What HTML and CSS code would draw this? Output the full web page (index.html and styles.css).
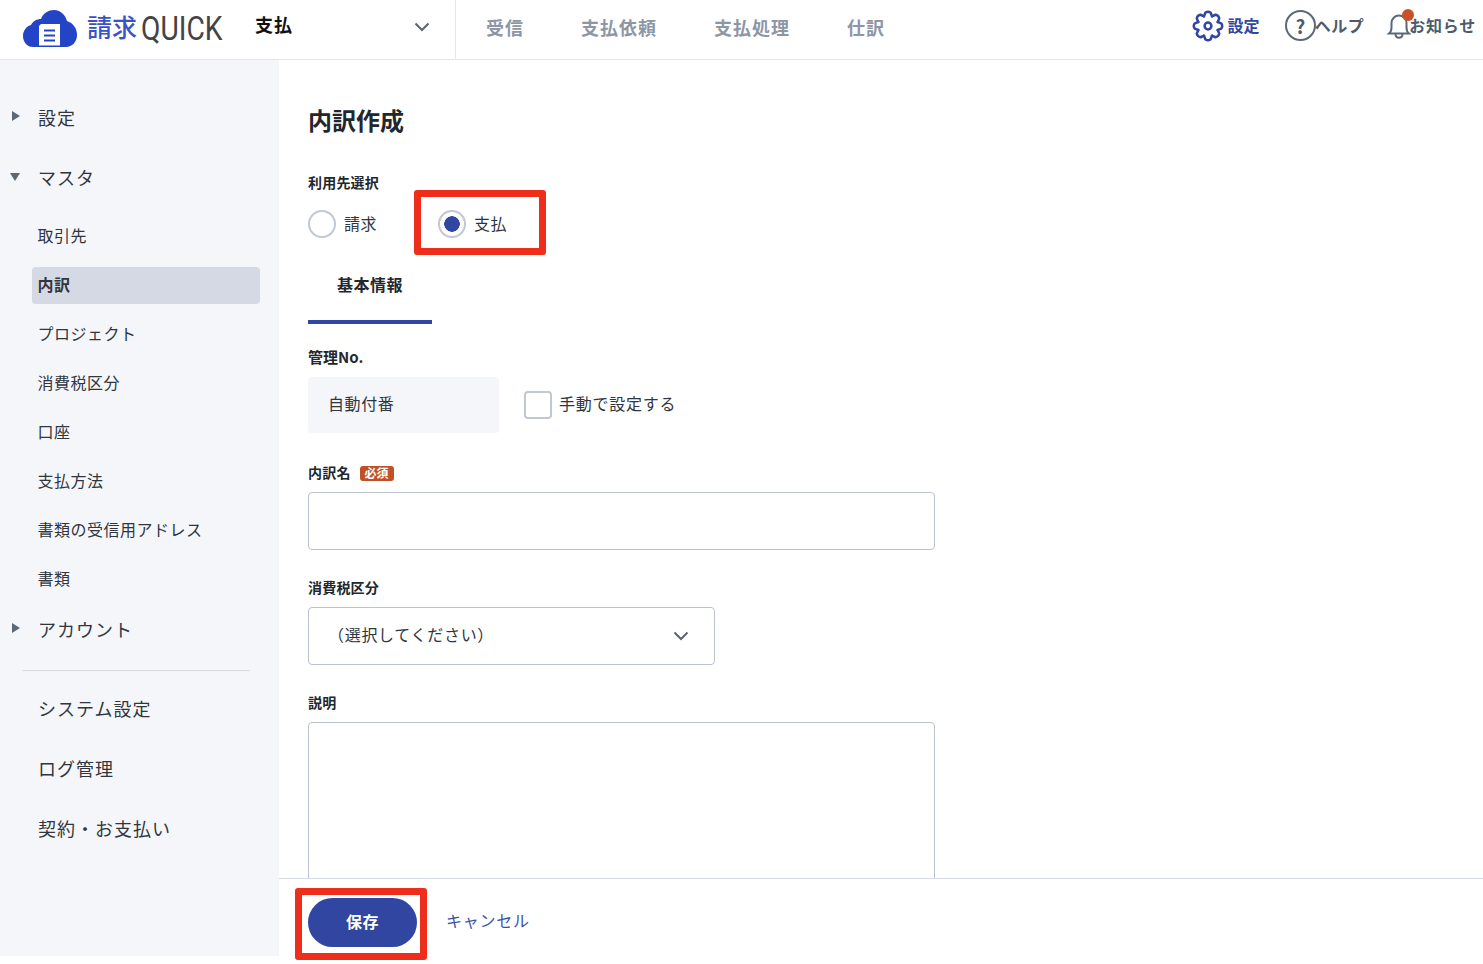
FILE: index.html
```html
<!DOCTYPE html>
<html lang="ja">
<head>
<meta charset="utf-8">
<title>内訳作成</title>
<link rel="stylesheet" href="styles.css">
</head>
<body>
<header class="topbar">
  <div class="brand">
    <svg class="logo" viewBox="0 0 54 39" width="54" height="39" aria-hidden="true">
      <path fill="#2444c8" d="M10 38C4 38 0 33 0 27C0 21 4 17 8 16C10 12 14 10 18 10C20 4 26 1 31 1C37 1 42 5 44 12C50 14 54 19 54 26C54 33 49 38 43 38Z"/>
      <path fill="#fff" d="M18 15H37V36.500H16V17Z"/>
      <path stroke="#2444c8" stroke-width="2" d="M21 21.500H32M21 26.500H32M21 31.500H32"/>
    </svg>
    <span class="wordmark"><span class="wordmark-ja">請求</span><span class="wordmark-en">QUICK</span></span>
  </div>
  <div class="switcher">
    <span class="switcher-label">支払</span>
    <svg class="chev" viewBox="0 0 16 10" width="16" height="10" aria-hidden="true"><path d="M1.500 1.500 8 8l6.500-6.500" fill="none" stroke="#5b6472" stroke-width="2"/></svg>
  </div>
  <nav class="mainnav">
    <a>受信</a><a>支払依頼</a><a>支払処理</a><a>仕訳</a>
  </nav>
  <div class="tools">
    <a class="tool tool-set">
      <svg viewBox="-16 -16 32 32" width="32" height="32" aria-hidden="true">
        <defs><path id="cog" d="M-4-9.700-2.700-13.200Q0-15.200 2.700-13.200L4-9.700"/></defs>
        <g fill="none" stroke="#3046a0" stroke-width="2.500" stroke-linejoin="round" stroke-linecap="round">
          <use href="#cog"/><use href="#cog" transform="rotate(45)"/><use href="#cog" transform="rotate(90)"/><use href="#cog" transform="rotate(135)"/><use href="#cog" transform="rotate(180)"/><use href="#cog" transform="rotate(225)"/><use href="#cog" transform="rotate(270)"/><use href="#cog" transform="rotate(315)"/>
          <circle r="3.400"/>
        </g>
      </svg>
      <span class="tool-label">設定</span>
    </a>
    <a class="tool tool-help">
      <span class="help-circle">?</span>
      <span class="tool-label">ヘルプ</span>
    </a>
    <a class="tool tool-bell">
      <span class="bell-wrap">
        <svg viewBox="0 0 24 30" width="24" height="30" aria-hidden="true"><path d="M2 22.500c2-1.500 2.500-3 2.500-6V12a7.500 7.500 0 0 1 15 0v4.500c0 3 .5 4.500 2.500 6zM8.500 23c0 5 7 5 7 0" fill="none" stroke="#5b6878" stroke-width="2"/></svg>
        <i class="bell-dot"></i>
      </span>
      <span class="tool-label bell-label">お知らせ</span>
    </a>
  </div>
</header>
<div class="shell">
  <aside class="sidebar">
    <a class="group"><i class="tri tri-right"></i>設定</a>
    <a class="group group-second"><i class="tri tri-down"></i>マスタ</a>
    <ul class="sublist">
      <li>取引先</li>
      <li class="active">内訳</li>
      <li>プロジェクト</li>
      <li>消費税区分</li>
      <li>口座</li>
      <li>支払方法</li>
      <li>書類の受信用アドレス</li>
      <li>書類</li>
    </ul>
    <a class="group group-account"><i class="tri tri-right"></i>アカウント</a>
    <hr class="divider">
    <a class="plain">システム設定</a>
    <a class="plain">ログ管理</a>
    <a class="plain">契約・お支払い</a>
  </aside>
  <main class="main">
    <div class="content">
      <h1 class="title">内訳作成</h1>
      <div class="label label-use">利用先選択</div>
      <div class="radios">
        <label class="radio"><i class="radio-dot"></i><span>請求</span></label>
        <label class="radio"><i class="radio-dot on"></i><span>支払</span></label>
      </div>
      <div class="tab">基本情報</div>
      <div class="label label-no">管理No.</div>
      <div class="auto-row">
        <div class="auto-box">自動付番</div>
        <label class="check"><i class="check-box"></i><span>手動で設定する</span></label>
      </div>
      <div class="label label-name">内訳名<span class="req">必須</span></div>
      <div class="input"></div>
      <div class="label label-tax">消費税区分</div>
      <div class="select"><span>（選択してください）</span>
        <svg viewBox="0 0 16 10" width="16" height="10" aria-hidden="true"><path d="M1.500 1.500 8 8l6.500-6.500" fill="none" stroke="#5b6472" stroke-width="2"/></svg>
      </div>
      <div class="label label-desc">説明</div>
      <div class="textarea"></div>
    </div>
    <footer class="actions">
      <button class="save">保存</button>
      <a class="cancel">キャンセル</a>
    </footer>
  </main>
</div>
<div class="callout callout-radio"></div>
<div class="callout callout-save"></div>
</body>
</html>
```
FILE: styles.css
```css
* { box-sizing: border-box; }
html, body { margin: 0; height: 964px; overflow: hidden; background: #fff; }
body {
  position: relative;
  font-family: "Noto Sans CJK JP", "Noto Sans", sans-serif;
  color: #2b3038;
  font-size: 16px;
  letter-spacing: .5px;
}
a { display: block; }

/* top bar */
.topbar {
  height: 60px;
  display: flex;
  align-items: stretch;
  border-bottom: 1px solid #e4e6ec;
}
.brand {
  width: 255px;
  padding: 9px 0 0 23px;
  display: flex;
  align-items: flex-start;
  flex: none;
}
.logo { flex: none; }
.wordmark {
  margin: 3px 0 0 10px;
  display: flex;
  align-items: center;
  height: 32px;
  white-space: nowrap;
}
.wordmark-ja { font-size: 25px; line-height: 28px; height: 32px; font-weight: 500; color: #3a52c4; letter-spacing: 0; }
.wordmark-en {
  font-family: Roboto, sans-serif;
  font-weight: 400;
  font-size: 34px;
  line-height: 34px;
  color: #444;
  letter-spacing: 0;
  display: inline-block;
  width: 82px;
  margin-left: 4px;
  transform: scaleX(.83);
  transform-origin: left center;
}
.switcher {
  width: 201px;
  flex: none;
  border-right: 1px solid #e4e6ec;
  display: flex;
  align-items: center;
  justify-content: space-between;
  padding: 0 25px 6px 0;
  font-size: 18px;
  font-weight: 700;
  letter-spacing: 1px;
  color: #111;
}
.switcher-label { margin-bottom: 6px; }
.mainnav {
  display: flex;
  align-items: center;
  gap: 57px;
  padding-left: 30px;
  padding-bottom: 6px;
  font-size: 18px;
  font-weight: 700;
  letter-spacing: 1px;
  color: #8d96a5;
}
.tools {
  margin-left: auto;
  display: flex;
  align-items: center;
  padding-right: 7px;
  font-weight: 700;
  padding-bottom: 8px;
}
.tool { display: flex; align-items: center; }
.tool-label { margin-bottom: 2px; }
.tool-set { color: #3046a0; gap: 3px; font-size: 16px; letter-spacing: .2px; margin-right: 25px; }
.tool-help { color: #4f5b6b; font-size: 16px; margin-right: 23px; }
.help-circle {
  width: 31px;
  height: 31px;
  border: 2px solid #5b6878;
  border-radius: 50%;
  display: flex;
  align-items: center;
  justify-content: center;
  font-size: 19px;
  line-height: 1;
  font-weight: 700;
  letter-spacing: 0;
  color: #4f5b6b;
  margin-right: -1px;
}
.tool-bell { color: #4f5b6b; font-size: 16px; }
.bell-wrap { position: relative; display: block; height: 30px; margin-right: -2px; }
.bell-dot {
  position: absolute;
  top: -2px;
  right: -3px;
  width: 12px;
  height: 12px;
  border-radius: 50%;
  background: #c8512a;
}
.bell-label { position: relative; letter-spacing: .75px; }

/* shell */
.shell { display: flex; height: 904px; }

/* sidebar */
.sidebar {
  width: 279px;
  height: 896px;
  flex: none;
  background: #f5f6fa;
  padding-top: 39px;
  display: flex;
  flex-direction: column;
}
.group, .plain {
  height: 40px;
  line-height: 36px;
  font-size: 18px;
  letter-spacing: 1px;
  padding-left: 38px;
  color: #2f3640;
  position: relative;
}
.group-second { margin-top: 19.500px; }
.tri { position: absolute; left: 12px; width: 0; height: 0; }
.tri-right {
  top: 12px;
  border-left: 8px solid #5b6878;
  border-top: 5px solid transparent;
  border-bottom: 5px solid transparent;
}
.tri-down {
  left: 10px;
  top: 14px;
  border-top: 8px solid #5b6878;
  border-left: 5px solid transparent;
  border-right: 5px solid transparent;
}
.sublist {
  list-style: none;
  margin: 19px 0 0;
  padding: 0;
  display: flex;
  flex-direction: column;
  gap: 12.140px;
}
.sublist li {
  height: 37px;
  line-height: 34px;
  margin: 0 19px 0 32px;
  padding-left: 5.500px;
  border-radius: 4px;
  color: #2f3640;
}
.sublist li.active { background: #d5d9e3; font-weight: 700; }
.group-account { margin-top: 12.500px; }
.divider {
  width: 228px;
  height: 1px;
  border: 0;
  background: #d9dce3;
  margin: 19px 0 19px 22px;
}
.plain + .plain { margin-top: 20px; }
.plain:first-of-type { letter-spacing: .7px; }

/* main */
.main {
  flex: 1;
  min-width: 0;
  display: flex;
  flex-direction: column;
}
.content {
  flex: 1;
  min-height: 0;
  overflow: hidden;
  padding: 0 0 0 29px;
}
.title {
  margin: 0;
  padding-top: 43px;
  font-size: 24px;
  line-height: 34px;
  font-weight: 700;
  letter-spacing: 0;
  color: #22272e;
}
.label {
  font-size: 14px;
  font-weight: 700;
  height: 20px;
  line-height: 18px;
  letter-spacing: .2px;
  color: #22272e;
}
.label-use { margin-top: 36px; }
.radios { display: flex; gap: 61px; margin-top: 17px; height: 28px; }
.radio { display: flex; align-items: center; gap: 8px; color: #2f3640; }
.radio span { margin-bottom: 2px; }
.radio-dot {
  width: 28px;
  height: 28px;
  border: 2px solid #c0c8d6;
  border-radius: 50%;
  background: #fff;
  display: block;
}
.radio-dot.on {
  background: radial-gradient(circle, #3046a0 0 7.500px, #fff 8px);
}
.tab {
  width: 124px;
  height: 67px;
  margin-top: 19px;
  padding: 15px 0 0 29px;
  border-bottom: 4px solid #3046a0;
  font-weight: 700;
  line-height: 24px;
  letter-spacing: .5px;
  color: #22272e;
}
.label-no { margin-top: 23px; font-size: 15px; line-height: 20px; letter-spacing: 0; }
.auto-row { display: flex; align-items: center; gap: 25px; margin-top: 10px; }
.auto-box {
  width: 191px;
  height: 56px;
  background: #f5f6fa;
  border-radius: 4px;
  padding-left: 20px;
  line-height: 52px;
  letter-spacing: .6px;
  color: #2f3640;
}
.check { display: flex; align-items: center; gap: 7px; color: #2f3640; letter-spacing: .75px; }
.check span { margin-bottom: 4px; }
.check-box {
  width: 28px;
  height: 28px;
  border: 2px solid #c0c8d6;
  border-radius: 4px;
  display: block;
}
.label-name { margin-top: 29px; display: flex; align-items: center; }
.req {
  margin-left: 9px;
  width: 34px;
  height: 15px;
  margin-top: 2px;
  background: #bf5126;
  border-radius: 3px;
  color: #fff;
  font-size: 12px;
  line-height: 14px;
  text-align: center;
  letter-spacing: 0;
}
.input {
  width: 627px;
  height: 58px;
  margin-top: 10px;
  border: 1px solid #bcc3cf;
  border-radius: 4px;
}
.label-tax { margin-top: 28px; }
.select {
  width: 407px;
  height: 58px;
  margin-top: 9px;
  border: 1px solid #bcc3cf;
  border-radius: 4px;
  padding: 0 25px 0 19px;
  display: flex;
  align-items: center;
  justify-content: space-between;
  letter-spacing: .7px;
  color: #2f3640;
}
.select span { margin-bottom: 4px; }
.label-desc { margin-top: 28px; }
.textarea {
  width: 627px;
  height: 300px;
  margin-top: 9px;
  border: 1px solid #bcc3cf;
  border-radius: 4px;
}

/* footer */
.actions {
  flex: none;
  height: 86px;
  background: #fff;
  border-top: 1px solid #d5d9e3;
  display: flex;
  align-items: flex-start;
  padding: 19px 0 0 29px;
  gap: 29px;
}
.save {
  width: 109px;
  height: 49px;
  border: 0;
  border-radius: 25px;
  background: #3046a0;
  color: #fff;
  font: 700 16px/47px "Noto Sans CJK JP", sans-serif;
  letter-spacing: .5px;
  padding: 0 0 2px;
}
.cancel { color: #3a52a8; line-height: 44px; letter-spacing: .75px; }

/* red annotation frames */
.callout {
  position: absolute;
  border: 7px solid #ee2e1a;
  border-radius: 3px;
}
.callout-radio { left: 414px; top: 190px; width: 132px; height: 65px; }
.callout-save { left: 295px; top: 888px; width: 132px; height: 72px; }
```
